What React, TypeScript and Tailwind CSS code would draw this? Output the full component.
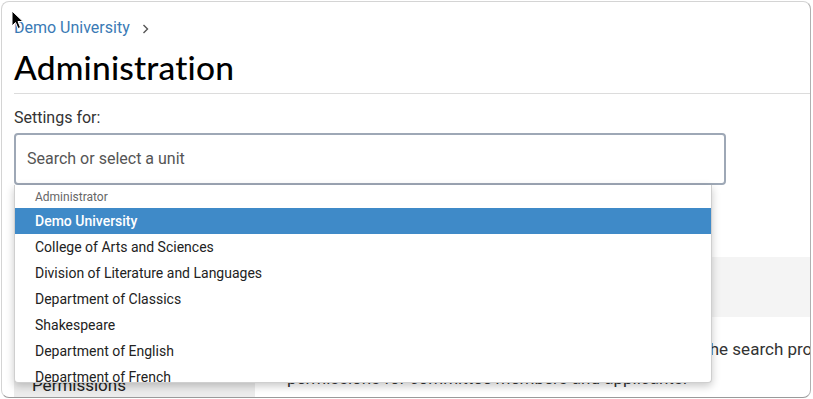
import React from "react";

const units = [
  "College of Arts and Sciences",
  "Division of Literature and Languages",
  "Department of Classics",
  "Shakespeare",
  "Department of English",
  "Department of French",
  "Department of German",
];

const Cursor = () => (
  <svg
    className="absolute left-[9px] top-[8px]"
    width="14"
    height="20"
    viewBox="0 0 14 20"
  >
    <path
      d="M1 1 L1 16 L4.5 12.5 L7 18.5 L9.5 17.5 L7 11.5 L12 11.5 Z"
      fill="#000"
      stroke="#fff"
      strokeWidth="1"
      strokeLinejoin="round"
    />
  </svg>
);

const App = () => {
  return (
    <div className="w-[813px] h-[399px] bg-white pt-[1px] pl-[1px] font-['Roboto',sans-serif] text-[#333]">
      <div className="relative w-[810px] h-[397px] border border-[#d4d4d4] border-b-[#9a9a9a] border-r-[#b0b0b0] rounded-[8px] overflow-hidden bg-white">
        <Cursor />
        <div className="pl-[12px] pt-[16px]">
          <div className="flex items-center gap-[12px] text-[16px] leading-[20px]">
            <span className="text-[#3a7ab5]">Demo University</span>
            <svg width="7" height="10" viewBox="0 0 7 10" className="mt-[1px]">
              <path d="M1.5 1 L5.5 5 L1.5 9" fill="none" stroke="#555" strokeWidth="1.4" />
            </svg>
          </div>
          <h1 className="mt-[9px] text-[33.5px] leading-[40px] font-medium text-black font-['Lato',sans-serif] tracking-[0.2px]">
            Administration
          </h1>
          <div className="mt-[6px] border-t border-[#dcdcdc]" />
          <div className="mt-[14px] text-[16px] leading-[20px]">Settings for:</div>
          <div className="relative mt-[5px] w-[712px]">
            <div className="h-[52px] border-2 border-[#9ea8b6] rounded-[4px] flex items-center px-[11px] text-[16px] text-[#555]">
              Search or select a unit
            </div>
            <div className="absolute z-10 left-0 top-full w-[698px] h-[198px] overflow-hidden bg-white border border-[#cfcfcf] border-t-0 rounded-b-[4px] shadow-[0_3px_8px_rgba(0,0,0,0.22)]">
              <div className="h-[23px] pl-[20px] flex items-center text-[12px] text-[#666]">
                Administrator
              </div>
              <div className="h-[26px] pl-[20px] flex items-center bg-[#3f8ac8] text-white text-[14px] font-medium">
                Demo University
              </div>
              {units.map((u) => (
                <div key={u} className="h-[26px] pl-[20px] flex items-center text-[14px] text-[#222]">
                  {u}
                </div>
              ))}
            </div>
          </div>
          <div className="mt-[72px] flex h-[200px]">
            <div className="w-[241px] bg-[#ececec] pt-[116px] pl-[18px]">
              <div className="text-[17px] leading-[24px] text-[#222]">Permissions</div>
            </div>
            <div className="flex-1 min-w-0">
              <div className="h-[60px] bg-[#f4f4f4]" />
              <div className="mt-[18px] pl-[32px] text-[17px] leading-[29px] text-[#333] whitespace-nowrap">
                <div>Select a unit to configure its settings and templates for the search process</div>
                <div>permissions for committee members and applicants.</div>
              </div>
            </div>
          </div>
        </div>
      </div>
    </div>
  );
};

export default App;
